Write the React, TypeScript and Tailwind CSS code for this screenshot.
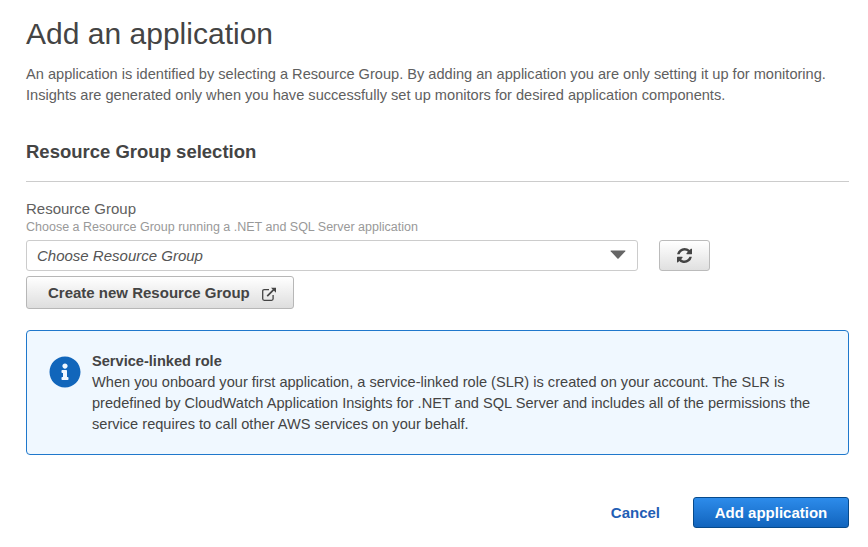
import { FaInfoCircle } from "react-icons/fa";

function RefreshIcon() {
  return (
    <svg viewBox="0 0 1536 1536" className="h-[15px] w-[15px]" fill="#444">
      <path d="M1511 928q0 5-1 7-64 268-268 434.5T764 1536q-146 0-282.5-55T238 1324l-129 129q-19 19-45 19t-45-19-19-45V960q0-26 19-45t45-19h448q26 0 45 19t19 45-19 45l-137 137q71 66 161 102t187 36q134 0 250-65t186-179q11-17 53-117 8-23 30-23h192q13 0 22.5 9.5t9.5 22.5zm25-800v448q0 26-19 45t-45 19h-448q-26 0-45-19t-19-45 19-45l138-138Q969 256 768 256q-134 0-250 65T332 500q-11 17-53 117-8 23-30 23H50q-13 0-22.5-9.5T18 608v-7q65-268 270-434.5T768 0q146 0 284 55.5T1297 212l130-129q19-19 45-19t45 19 19 45z" />
    </svg>
  );
}

function ExternalIcon() {
  return (
    <svg viewBox="0 0 16 16" className="mt-[3px] h-4 w-4" fill="none" stroke="#444" strokeWidth="1.3">
      <path d="M8 3.6H3.2Q1.7 3.6 1.7 5.1v7.7q0 1.5 1.5 1.5h7.4q1.5 0 1.5-1.5V9" />
      <path d="M6.2 10.2 12.7 3.7" strokeWidth="1.7" />
      <path d="M10 1.7h5v5z" fill="#444" stroke="none" />
    </svg>
  );
}

export default function App() {
  return (
    <main className="h-[547px] w-[868px] overflow-hidden bg-white pl-[26px] pr-[19px] pt-[14px] font-['Liberation_Sans',Arial,sans-serif] text-[15px] leading-[21px] text-[#444]">
      <h1 className="text-[30px] leading-[40px] tracking-[0.01px]">Add an application</h1>
      <p className="mt-[10px] whitespace-nowrap text-[14.6px] text-[#606060]">
        <span className="block">An application is identified by selecting a Resource Group. By adding an application you are only setting it up for monitoring.</span>
        <span className="block">Insights are generated only when you have successfully set up monitors for desired application components.</span>
      </p>
      <h2 className="mt-[34px] h-[42px] border-b border-[#ccc] text-[18.5px] font-bold leading-[24px]">Resource Group selection</h2>
      <section className="mt-[17px]">
        <label className="block text-[15px] leading-[20px] text-[#606060]">Resource Group</label>
        <p className="text-[12.5px] leading-[16px] text-[#999]">Choose a Resource Group running a .NET and SQL Server application</p>
        <div className="mt-[5px] flex gap-[21px]">
          <button className="flex h-[31px] w-[612px] items-center justify-between rounded-[3px] border border-[#ccc] bg-white pl-[10px] pr-[11px] text-[15px] italic text-[#555]">
            <span>Choose Resource Group</span>
            <svg viewBox="0 0 16 9" className="h-[9px] w-4 -translate-y-px" fill="#666">
              <path d="M1 .5h14q.7 0 .3.7L8.6 8.5q-.6.6-1.2 0L.7 1.2Q.3.5 1 .5z" />
            </svg>
          </button>
          <button aria-label="Refresh" className="flex h-[31px] w-[51px] items-center justify-center rounded-[3px] border border-[#bbb] bg-linear-to-b from-white to-[#e0e0e0]">
            <RefreshIcon />
          </button>
        </div>
        <button className="mt-[5px] flex h-[33px] w-[268px] items-center rounded-[3px] border border-[#b7b7b7] bg-linear-to-b from-white to-[#dedede] pl-[21px] font-bold">
          <span className="w-[213px] whitespace-nowrap text-left">Create new Resource Group</span>
          <ExternalIcon />
        </button>
      </section>
      <aside className="mt-[21px] flex h-[125px] rounded-[4px] border border-[#1f78cc] bg-[#f0f8ff] pl-[22px] pt-[20px]">
        <FaInfoCircle className="mt-[5px] h-8 w-8 shrink-0 text-[#1166bb]" />
        <div className="ml-[11px] whitespace-nowrap text-[14.6px]">
          <h3 className="font-bold">Service-linked role</h3>
          <p>
            <span className="block">When you onboard your first application, a service-linked role (SLR) is created on your account. The SLR is</span>
            <span className="block">predefined by CloudWatch Application Insights for .NET and SQL Server and includes all of the permissions the</span>
            <span className="block">service requires to call other AWS services on your behalf.</span>
          </p>
        </div>
      </aside>
      <footer className="mt-[42px] flex items-center justify-end font-bold">
        <button className="mr-[33px] text-[#1f5eb5]">Cancel</button>
        <button className="h-[31px] w-[156px] rounded-[3px] border border-[#074a8b] bg-linear-to-b from-[#2d8ceb] to-[#1164bd] text-white">Add application</button>
      </footer>
    </main>
  );
}
